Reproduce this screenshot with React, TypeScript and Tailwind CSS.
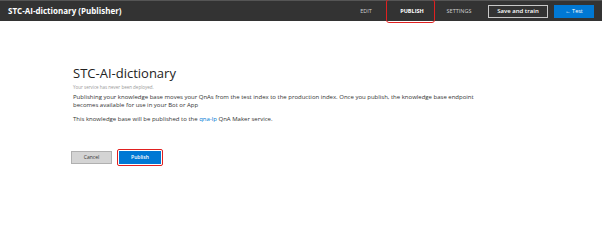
import React from "react";

export default function App() {
  return (
    <div className="w-[602px] h-[241px] bg-white overflow-hidden relative" style={{ fontFamily: '"Open Sans", "Noto Sans", sans-serif' }}>
      <div className="h-[21px] bg-[#333333] border-t border-[#555] flex items-center pl-[8px] pr-[8px]">
        <div className="text-white text-[8px] font-bold tracking-[0px] flex-1">STC-AI-dictionary (Publisher)</div>
        <div className="flex items-center h-full">
          <div className="text-[#d0d0d0] text-[5.5px] w-[46px] text-center">EDIT</div>
          <div className="relative h-full flex items-center">
            <div className="text-white text-[5.5px] font-bold w-[46px] text-center">PUBLISH</div>
            <div className="absolute left-[-3px] top-[-2px] w-[49px] h-[24px] border border-[#e02020] rounded-[3px]" />
          </div>
          <div className="text-[#d0d0d0] text-[5.5px] w-[48px] text-center">SETTINGS</div>
          <div className="ml-[5px] h-[13px] w-[60px] border border-[#c8c8c8] flex items-center justify-center text-white text-[6px] font-semibold">Save and train</div>
          <div className="ml-[6px] h-[13px] w-[40px] bg-[#0078d4] flex items-center justify-center text-white text-[5.5px]">← Test</div>
        </div>
      </div>
      <div className="pl-[73px] pt-[44px]">
        <div className="text-[13px] text-[#222] leading-[16px]">STC-AI-dictionary</div>
        <div className="text-[4.5px] text-[#999] mt-[3px]">Your service has never been deployed.</div>
        <div className="text-[6px] text-[#333] leading-[8px] mt-[2px] w-[420px]">
          Publishing your knowledge base moves your QnAs from the test index to the production index. Once you publish, the knowledge base endpoint becomes available for use in your Bot or App
        </div>
        <div className="text-[6px] text-[#333] leading-[8px] mt-[6px]">
          This knowledge base will be published to the <span className="text-[#0078d4]">qna-lp</span> QnA Maker service.
        </div>
        <div className="flex gap-[7px] mt-[28px] ml-[-2px]">
          <div className="w-[41px] h-[13px] bg-[#d4d4d4] border border-[#b0b0b0] flex items-center justify-center text-[5px] text-[#333]">Cancel</div>
          <div className="relative">
            <div className="w-[42px] h-[13px] bg-[#0078d4] flex items-center justify-center text-[5px] text-white font-semibold">Publish</div>
            <div className="absolute left-[-2px] top-[-2px] w-[46px] h-[17px] border border-[#e02020] rounded-[2px]" />
          </div>
        </div>
      </div>
    </div>
  );
}
